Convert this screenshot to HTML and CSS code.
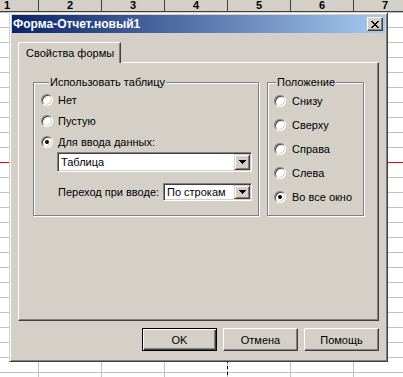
FILE: index.html
```html
<!doctype html>
<html lang="ru">
<head>
  <meta charset="utf-8">
  <title>Форма-Отчет.новый1</title>
  <link rel="stylesheet" href="styles.css">
</head>
<body>
  <div class="sheet">
    <div class="col-heads">
      <div class="col-head">1</div>
      <div class="col-head">2</div>
      <div class="col-head">3</div>
      <div class="col-head">4</div>
      <div class="col-head">5</div>
      <div class="col-head">6</div>
      <div class="col-head">7</div>
    </div>
    <div class="grid"></div>

    <div class="dialog">
      <div class="titlebar">
        <span class="title">Форма-Отчет.новый1</span>
        <span class="close-btn">
          <svg width="8" height="7" viewBox="0 0 8 7"><path d="M0 0h2v1h-2z M6 0h2v1h-2z M1 1h2v1h-2z M5 1h2v1h-2z M2 2h4v1h-4z M3 3h2v1h-2z M2 4h4v1h-4z M1 5h2v1h-2z M5 5h2v1h-2z M0 6h2v1h-2z M6 6h2v1h-2z" fill="#000"/></svg>
        </span>
      </div>

      <div class="dialog-body">
        <div class="tabs">
          <div class="tab active">Свойства формы</div>
        </div>

        <div class="tab-panel">
          <div class="group group-table">
            <div class="group-title">Использовать таблицу</div>
            <div class="radio-row"><span class="radio"></span>Нет</div>
            <div class="radio-row"><span class="radio"></span>Пустую</div>
            <div class="radio-row"><span class="radio checked"></span>Для ввода данных:</div>
            <div class="combo combo-table">
              <span class="combo-value">Таблица</span>
              <span class="combo-btn"><svg width="7" height="4" viewBox="0 0 7 4"><path d="M0 0h7v1h-7z M1 1h5v1h-5z M2 2h3v1h-3z M3 3h1v1h-1z" fill="#000"/></svg></span>
            </div>
            <div class="field-row">
              <span>Переход при вводе:</span>
              <div class="combo combo-move">
                <span class="combo-value">По строкам</span>
                <span class="combo-btn"><svg width="7" height="4" viewBox="0 0 7 4"><path d="M0 0h7v1h-7z M1 1h5v1h-5z M2 2h3v1h-3z M3 3h1v1h-1z" fill="#000"/></svg></span>
              </div>
            </div>
          </div>

          <div class="group group-pos">
            <div class="group-title">Положение</div>
            <div class="radio-row"><span class="radio"></span>Снизу</div>
            <div class="radio-row"><span class="radio"></span>Сверху</div>
            <div class="radio-row"><span class="radio"></span>Справа</div>
            <div class="radio-row"><span class="radio"></span>Слева</div>
            <div class="radio-row"><span class="radio checked"></span>Во все окно</div>
          </div>
        </div>

        <div class="buttons">
          <button class="btn btn-default">OK</button>
          <button class="btn">Отмена</button>
          <button class="btn">Помощь</button>
        </div>
      </div>
    </div>
  </div>
</body>
</html>
```

FILE: styles.css
```css
* {
  box-sizing: border-box;
}

body {
  margin: 0;
  font-family: 'Liberation Sans', Arial, sans-serif;
  font-size: 11px;
  color: #000;
  background: #fff;
}

.sheet {
  position: relative;
  width: 403px;
  height: 377px;
  overflow: hidden;
  background: #fff;
}

/* excel column headers */
.col-heads {
  display: flex;
  height: 12px;
  margin-left: -24px;
  background: #d4d0c8;
  border-bottom: 1px solid #404040;
}

.col-head {
  flex: none;
  width: 63px;
  border-right: 1px solid #404040;
  text-align: center;
  font-weight: bold;
  font-size: 11px;
  line-height: 11px;
}

.grid {
  height: 365px;
  background:
    linear-gradient(#ff0000, #ff0000) 0 150px / 100% 1px no-repeat,
    repeating-linear-gradient(to bottom, #000 0 3px, transparent 3px 6px) 227px 0 / 1px 100% no-repeat,
    linear-gradient(to right, #c0c0c0 0 1px, transparent 1px) 38px 0 / 63px 100% repeat-x,
    linear-gradient(#c0c0c0 0 1px, transparent 1px) 0 0 / 100% 15px repeat-y;
}

/* dialog window */
.dialog {
  position: absolute;
  left: 9px;
  top: 12px;
  width: 379px;
  height: 350px;
  display: flex;
  flex-direction: column;
  padding: 2px;
  background: #d4d0c8;
  border: 1px solid;
  border-color: #d4d0c8 #404040 #404040 #d4d0c8;
  box-shadow: inset 1px 1px 0 #fff, inset -1px -1px 0 #808080;
}

.titlebar {
  display: flex;
  align-items: center;
  justify-content: space-between;
  height: 18px;
  padding: 0 2px 0 1px;
  background: linear-gradient(to right, #0a246a, #a6caf0);
  color: #fff;
}

.title {
  font-weight: bold;
  font-size: 12px;
}

.close-btn {
  display: flex;
  align-items: center;
  justify-content: center;
  width: 16px;
  height: 14px;
  background: #d4d0c8;
  border: 1px solid;
  border-color: #fff #404040 #404040 #fff;
  box-shadow: inset -1px -1px 0 #808080;
}

.dialog-body {
  display: flex;
  flex-direction: column;
  padding: 9px 6px 0 6px;
}

.tabs {
  display: flex;
  position: relative;
  z-index: 1;
  margin-bottom: -1px;
}

.tab {
  height: 21px;
  padding: 4px 6px 0 7px;
  background: #d4d0c8;
  border-top: 1px solid #fff;
  border-left: 1px solid #fff;
  border-right: 1px solid #404040;
  border-top-left-radius: 2px;
  box-shadow: inset -1px 0 0 #808080;
}

.tab-panel {
  display: flex;
  align-items: flex-start;
  height: 259px;
  padding: 19px 14px 0 14px;
  border: 1px solid;
  border-color: #fff #404040 #404040 #fff;
  box-shadow: inset -1px -1px 0 #808080;
}

/* etched group boxes */
.group {
  height: 134px;
  border: 1px solid #808080;
  box-shadow: 1px 1px 0 #fff, inset 1px 1px 0 #fff;
}

.group-table {
  width: 226px;
  padding: 0 7px;
}

.group-pos {
  width: 97px;
  margin-left: 8px;
  padding: 1px 6px 0 6px;
}

.group-title {
  width: fit-content;
  margin: -8px 0 0 8px;
  padding: 0 1px;
  line-height: 14px;
  background: #d4d0c8;
}

.group-pos .group-title {
  margin-top: -9px;
  margin-left: 2px;
}

.radio-row {
  display: flex;
  align-items: center;
  height: 21px;
}

.group-pos .radio-row {
  height: 24px;
}

.radio {
  position: relative;
  flex: none;
  width: 12px;
  height: 12px;
  margin-right: 5px;
  border-radius: 50%;
  background: #fff;
  border: 1px solid;
  border-color: #808080 #fff #fff #808080;
  box-shadow: inset 1px 1px 0 #404040, inset -1px -1px 0 #d4d0c8;
}

.group-pos .radio {
  margin-right: 6px;
}

.radio.checked::after {
  content: '';
  position: absolute;
  left: 3px;
  top: 3px;
  width: 4px;
  height: 4px;
  border-radius: 50%;
  background: #000;
}

/* combo boxes */
.combo {
  display: flex;
  align-items: stretch;
  background: #fff;
  border: 1px solid;
  border-color: #808080 #fff #fff #808080;
  box-shadow: inset 1px 1px 0 #404040, inset -1px -1px 0 #d4d0c8;
  padding: 1px;
}

.combo-table {
  width: 195px;
  height: 20px;
  margin-left: 16px;
}

.combo-move {
  width: 89px;
  height: 18px;
}

.combo-value {
  flex: 1;
  display: flex;
  align-items: center;
  padding-left: 2px;
}

.combo-btn {
  display: flex;
  align-items: center;
  justify-content: center;
  width: 16px;
  background: #d4d0c8;
  border: 1px solid;
  border-color: #d4d0c8 #404040 #404040 #d4d0c8;
  box-shadow: inset 1px 1px 0 #fff, inset -1px -1px 0 #808080;
}

.field-row {
  display: flex;
  align-items: center;
  justify-content: space-between;
  width: 194px;
  margin: 11px 0 0 17px;
}

/* dialog buttons */
.buttons {
  display: flex;
  justify-content: flex-end;
  gap: 6px;
  margin-top: 7px;
}

.btn {
  width: 75px;
  height: 23px;
  padding: 0;
  font-family: inherit;
  font-size: 11px;
  color: #000;
  background: #d4d0c8;
  border: 1px solid;
  border-color: #fff #404040 #404040 #fff;
  box-shadow: inset -1px -1px 0 #808080;
}

.btn-default {
  border-color: #000;
  box-shadow: inset 1px 1px 0 #fff, inset -1px -1px 0 #404040, inset -2px -2px 0 #808080;
}
```
